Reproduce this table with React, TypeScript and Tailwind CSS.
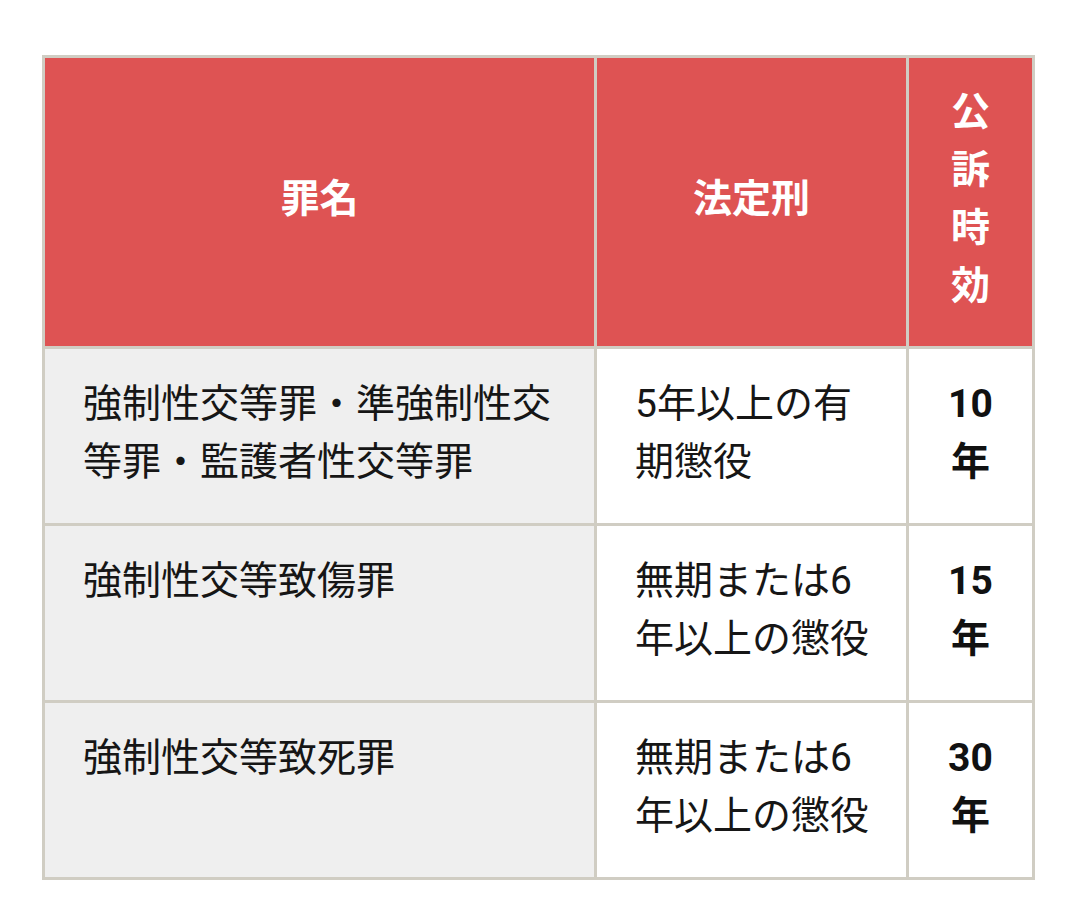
const rows = [
  {
    name: '強制性交等罪・準強制性交等罪・監護者性交等罪',
    penalty: '5年以上の有期懲役',
    years: '10',
  },
  {
    name: '強制性交等致傷罪',
    penalty: '無期または6年以上の懲役',
    years: '15',
  },
  {
    name: '強制性交等致死罪',
    penalty: '無期または6年以上の懲役',
    years: '30',
  },
];

export default function App() {
  return (
    <div
      className="min-h-[922px] w-[1080px] bg-white pt-[55px] pl-[42px]"
      style={{ fontFamily: 'Roboto, "Noto Sans CJK JP", sans-serif' }}
    >
      <div className="grid w-[993px] grid-cols-[549px_309px_123px] gap-[3px] bg-[#d0cdc3] p-[3px] text-[39px] leading-[58px]">
        <div className="flex items-center justify-center bg-[#de5353] px-[38px] pt-[25px] pb-[31px] font-bold text-white">
          罪名
        </div>
        <div className="flex items-center justify-center bg-[#de5353] px-[38px] pt-[25px] pb-[31px] font-bold text-white">
          法定刑
        </div>
        <div className="flex items-center justify-center bg-[#de5353] px-[38px] pt-[25px] pb-[31px] text-center font-bold text-white">
          公訴時効
        </div>

        {rows.map((row) => (
          <div key={row.years} className="contents">
            <div className="bg-[#efefef] pl-[38px] pr-[30px] pt-[26px] pb-[32px] text-[#161616]">{row.name}</div>
            <div className="bg-white pl-[38px] pr-[30px] pt-[26px] pb-[32px] text-[#161616]">{row.penalty}</div>
            <div className="bg-white px-[38px] pt-[26px] pb-[32px] text-center font-bold text-[#111]">
              {row.years}年
            </div>
          </div>
        ))}
      </div>
    </div>
  );
}
